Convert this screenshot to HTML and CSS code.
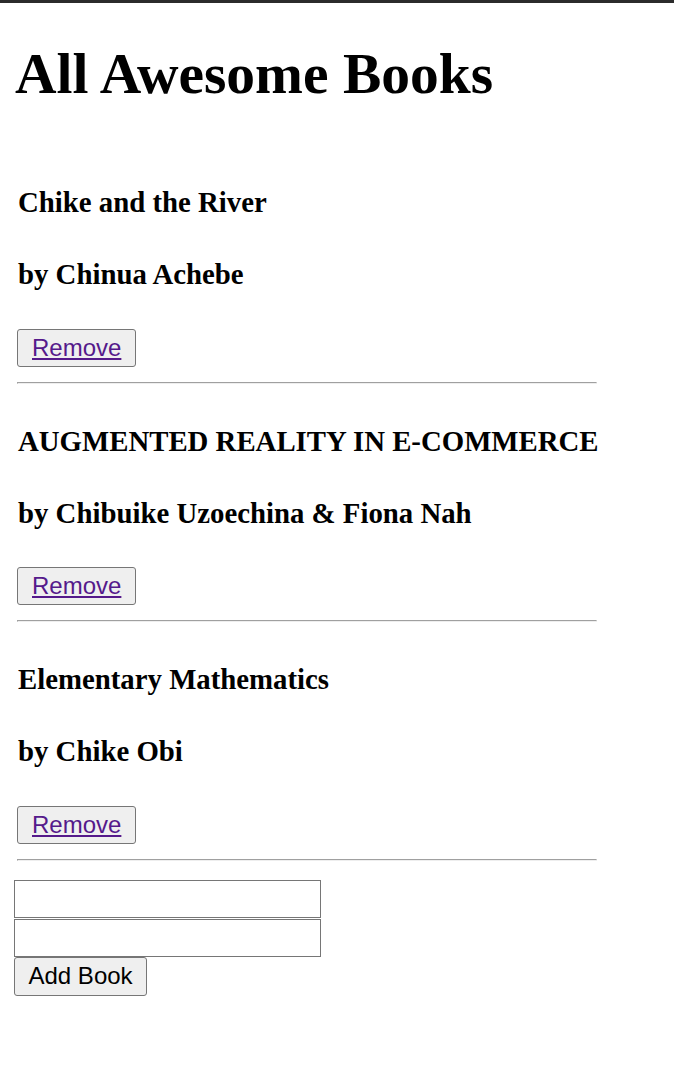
FILE: index.html
```html
<!DOCTYPE html>
<html lang="en">
<head>
<meta charset="utf-8">
<title>Awesome Books</title>
<link rel="stylesheet" href="styles.css">
</head>
<body>
<div class="topbar"></div>
<main class="page">
  <h1 class="page-title">All Awesome Books</h1>
  <section class="books">
    <div class="book">
      <h3 class="book-title">Chike and the River</h3>
      <h3 class="book-author">by Chinua Achebe</h3>
      <button class="btn remove-btn" type="button"><a class="remove-link" href="#">Remove</a></button>
      <hr class="divider">
    </div>
    <div class="book">
      <h3 class="book-title">AUGMENTED REALITY IN E-COMMERCE</h3>
      <h3 class="book-author">by Chibuike Uzoechina &amp; Fiona Nah</h3>
      <button class="btn remove-btn" type="button"><a class="remove-link" href="#">Remove</a></button>
      <hr class="divider">
    </div>
    <div class="book">
      <h3 class="book-title">Elementary Mathematics</h3>
      <h3 class="book-author">by Chike Obi</h3>
      <button class="btn remove-btn" type="button"><a class="remove-link" href="#">Remove</a></button>
      <hr class="divider">
    </div>
  </section>
  <form class="add-form">
    <input class="field" type="text" aria-label="Title">
    <input class="field" type="text" aria-label="Author">
    <button class="btn add-btn" type="button">Add Book</button>
  </form>
</main>
</body>
</html>
```

FILE: styles.css
```css
html, body {
  margin: 0;
  padding: 0;
  background: #ffffff;
}

body {
  font-family: "Liberation Serif", "Times New Roman", serif;
  color: #000000;
}

.topbar {
  height: 3px;
  background: #2b2b2b;
}

.page {
  padding: 0 14px;
}

.page-title {
  margin: 39px 0 0 1px;
  font-size: 57.5px;
  line-height: 64px;
  font-weight: bold;
}

.books {
  margin: 80px 0 0 3px;
}

.book {
  display: flex;
  flex-direction: column;
  align-items: flex-start;
  margin-bottom: 41px;
}

.book:last-child {
  margin-bottom: 0;
}

.book-title,
.book-author {
  margin: 0;
  padding-left: 1px;
  font-size: 28.8px;
  line-height: 32px;
  font-weight: bold;
}

.book-author {
  margin-top: 40px;
}

.btn {
  font-family: "Liberation Sans", Arial, sans-serif;
  font-size: 24px;
  height: 38px;
  line-height: 36px;
  padding: 0 14px;
  background: #efefef;
  border: 1px solid #767676;
  border-radius: 3px;
  color: #000000;
}

.remove-btn {
  margin-top: 38.5px;
}

.remove-link {
  color: #551a8b;
  text-decoration: underline;
}

.divider {
  box-sizing: border-box;
  width: 580px;
  height: 2px;
  margin: 15px 0 0 0;
  border-style: solid;
  border-width: 1px;
  border-color: #a0a0a0 #eeeeee #eeeeee #a0a0a0;
}

.add-form {
  display: flex;
  flex-direction: column;
  align-items: flex-start;
  margin-top: 19px;
}

.field {
  box-sizing: border-box;
  width: 307px;
  height: 38px;
  margin: 0;
  padding: 0 3px;
  border: 1px solid #767676;
  font-family: "Liberation Sans", Arial, sans-serif;
  font-size: 20px;
}

.field + .field {
  margin-top: 1px;
}

.add-btn {
  margin-top: 0;
  height: 39px;
  padding: 0 13.5px;
}
```
